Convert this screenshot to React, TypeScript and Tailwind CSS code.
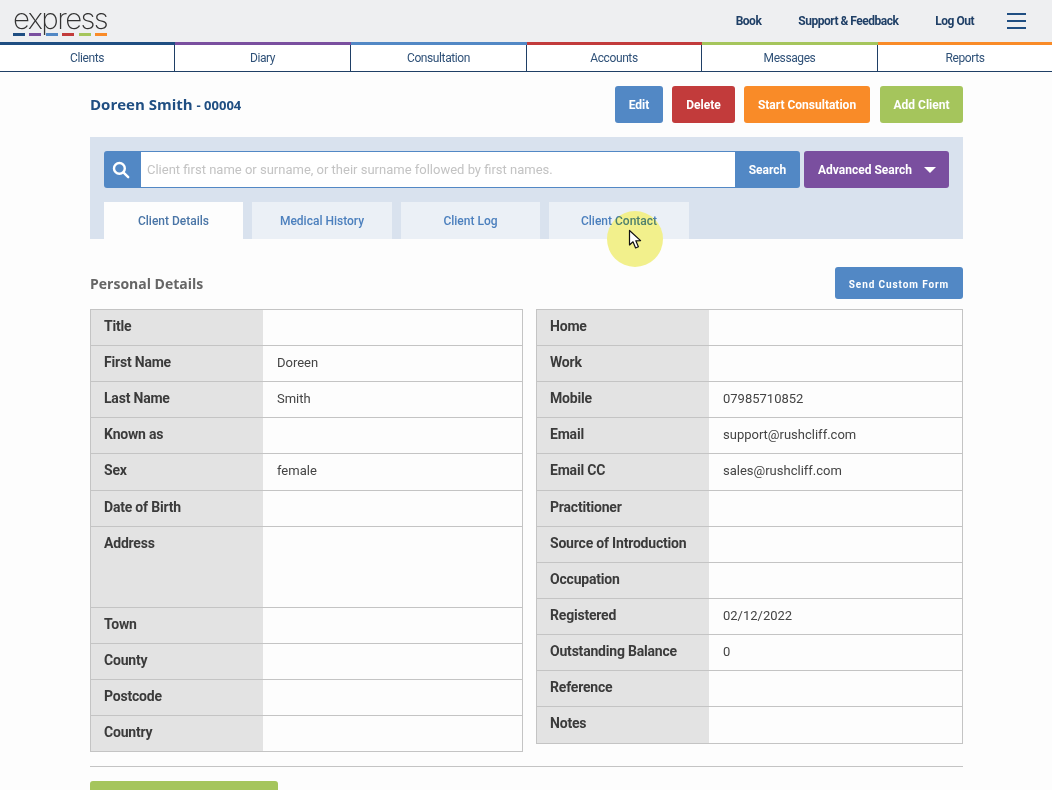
const navItems = [
  { label: "Clients", bar: "bg-[#1f4e82]" },
  { label: "Diary", bar: "bg-[#7a4f9f]" },
  { label: "Consultation", bar: "bg-[#5288c5]" },
  { label: "Accounts", bar: "bg-[#c23b3b]" },
  { label: "Messages", bar: "bg-[#a5c55c]" },
  { label: "Reports", bar: "bg-[#f98b28]" },
];

const logoDashes = ["bg-[#1f4e82]", "bg-[#7a4f9f]", "bg-[#5288c5]", "bg-[#c23b3b]", "bg-[#a5c55c]", "bg-[#f98b28]"];

const tabs = [
  { label: "Client Details", active: true, w: "w-[139px]" },
  { label: "Medical History", active: false, w: "w-[140px]" },
  { label: "Client Log", active: false, w: "w-[139px]" },
  { label: "Client Contact", active: false, w: "w-[140px]" },
];

type Row = { label: string; value?: string; tall?: boolean };

const leftRows: Row[] = [
  { label: "Title" },
  { label: "First Name", value: "Doreen" },
  { label: "Last Name", value: "Smith" },
  { label: "Known as" },
  { label: "Sex", value: "female" },
  { label: "Date of Birth" },
  { label: "Address", tall: true },
  { label: "Town" },
  { label: "County" },
  { label: "Postcode" },
  { label: "Country" },
];

const rightRows: Row[] = [
  { label: "Home" },
  { label: "Work" },
  { label: "Mobile", value: "07985710852" },
  { label: "Email", value: "support@rushcliff.com" },
  { label: "Email CC", value: "sales@rushcliff.com" },
  { label: "Practitioner" },
  { label: "Source of Introduction" },
  { label: "Occupation" },
  { label: "Registered", value: "02/12/2022" },
  { label: "Outstanding Balance", value: "0" },
  { label: "Reference" },
  { label: "Notes" },
];

function DetailTable({ rows, className }: { rows: Row[]; className: string }) {
  return (
    <div className={`border border-[#c4c4c4] ${className}`}>
      {rows.map((r, i) => (
        <div
          key={r.label}
          className={`flex ${r.tall ? "h-[81px]" : i === 0 ? "h-[35px]" : "h-[36.15px]"} ${i > 0 ? "border-t border-[#c4c4c4]" : ""}`}
        >
          <div className="w-[172px] shrink-0 bg-[#e3e3e3] pl-[13px] pt-[6px] text-[14px] leading-[20px] font-bold tracking-[-0.2px] text-[#3b3b3b]">
            {r.label}
          </div>
          <div className="pl-[14px] pt-[7px] text-[13px] leading-[20px] text-[#444]">{r.value}</div>
        </div>
      ))}
    </div>
  );
}

export default function App() {
  return (
    <div className="relative h-[790px] w-[1052px] overflow-hidden bg-[#fdfdfd] font-['Roboto',sans-serif]">
      <header className="flex h-[42px] items-center bg-[#eeeff1] pl-[13px] pr-[26px]">
        <div className="w-[100px] self-start pt-[6px]">
          <div className="-mt-[6px] -mb-[2px] font-['Inter',sans-serif] text-[29.5px] leading-[36px] font-extralight tracking-[-1.6px] whitespace-nowrap text-[#333]">
            express
          </div>
          <div className="-mt-[3px] flex gap-[4.4px]">
            {logoDashes.map((c) => (
              <div key={c} className={`h-[3px] w-[12px] ${c}`} />
            ))}
          </div>
        </div>
        <nav className="ml-auto flex items-center text-[12px] font-bold tracking-[-0.5px] text-[#1f3f66]">
          <span>Book</span>
          <span className="ml-[37px]">Support &amp; Feedback</span>
          <span className="ml-[37px]">Log Out</span>
          <div className="ml-[33px] flex w-[19px] flex-col gap-[5px]">
            <div className="h-[2px] bg-[#1f4e82]" />
            <div className="h-[2px] bg-[#1f4e82]" />
            <div className="h-[2px] bg-[#1f4e82]" />
          </div>
        </nav>
      </header>

      <div className="grid grid-cols-[175px_176px_176px_175px_176px_1fr] border-b border-[#1f3f66]">
        {navItems.map((n, i) => (
          <div key={n.label} className="flex flex-col">
            <div className={`h-[3px] ${n.bar}`} />
            <div
              className={`h-[26px] bg-white text-center text-[12px] leading-[26px] tracking-[-0.4px] text-[#2f5178] ${i < 5 ? "border-r border-[#1f3f66]" : ""}`}
            >
              {n.label}
            </div>
          </div>
        ))}
      </div>

      <main className="mx-[90px] mr-[89px]">
        <div className="mt-[14px] flex h-[37px] items-center">
          <h1 className="font-['Open_Sans',sans-serif] text-[15px] font-bold text-[#1f4e82]">
            Doreen Smith <span className="text-[13px]">- 00004</span>
          </h1>
          <div className="ml-auto flex gap-[9px] text-[12px] font-bold text-white">
            <button className="h-[37px] w-[48px] rounded-[3px] bg-[#5288c5]">Edit</button>
            <button className="h-[37px] w-[63px] rounded-[3px] bg-[#c23b3b]">Delete</button>
            <button className="h-[37px] w-[126px] rounded-[3px] bg-[#f98b28]">Start Consultation</button>
            <button className="ml-[1px] h-[37px] w-[83px] rounded-[3px] bg-[#a5c55c]">Add Client</button>
          </div>
        </div>

        <section className="mt-[14px] h-[102px] bg-[#d9e2ee] px-[14px] pt-[14px]">
          <div className="flex h-[37px]">
            <div className="flex w-[37px] items-center justify-center rounded-l-[3px] bg-[#5288c5] pr-[3px]">
              <svg width="18" height="18" viewBox="0 0 18 18" fill="none" stroke="#fff" strokeWidth="2.4" strokeLinecap="round">
                <circle cx="7.4" cy="7.4" r="5.4" />
                <path d="M11.6 11.6 L16.2 16.2" />
              </svg>
            </div>
            <div className="flex w-[594px] items-center border-y border-[#5288c5] bg-white pl-[6px] text-[13px] text-[#c3c3c3]">
              Client first name or surname, or their surname followed by first names.
            </div>
            <button className="w-[65px] rounded-r-[3px] bg-[#5288c5] text-[12px] font-bold text-white">Search</button>
            <button className="ml-[4px] flex w-[145px] items-center rounded-[3px] bg-[#7a4f9f] pl-[14px] text-[12px] font-bold text-white">
              Advanced Search
              <span className="ml-[12px] h-0 w-0 border-x-[6px] border-t-[6px] border-x-transparent border-t-white" />
            </button>
          </div>
          <div className="mt-[14px] flex gap-[9px]">
            {tabs.map((t) => (
              <div
                key={t.label}
                className={`h-[37px] ${t.w} text-center text-[12px] leading-[39px] font-medium ${t.active ? "bg-[#fdfdfd] text-[#4a76a8]" : "bg-[#ebf0f6] text-[#5288c5]"}`}
              >
                <span className="relative z-10 mix-blend-multiply">{t.label}</span>
              </div>
            ))}
          </div>
        </section>

        <div className="mt-[28px] flex h-[32px] items-center">
          <h2 className="font-['Open_Sans',sans-serif] text-[14px] font-bold text-[#666]">Personal Details</h2>
          <button className="ml-auto h-[32px] w-[128px] rounded-[3px] bg-[#5288c5] pt-[2px] text-[10px] font-bold tracking-[0.9px] text-white">
            Send Custom Form
          </button>
        </div>

        <div className="mt-[10px] flex items-start justify-between">
          <DetailTable rows={leftRows} className="w-[433px]" />
          <DetailTable rows={rightRows} className="w-[427px]" />
        </div>

        <hr className="mt-[14px] border-[#c4c4c4]" />
        <div className="mt-[14px] h-[30px] w-[188px] rounded-[3px] bg-[#a5c55c]" />
      </main>

      {/* click highlight + pointer */}
      <div className="absolute left-[607px] top-[211px] z-0 h-[56px] w-[56px] rounded-full bg-[#f2f08c]" />
      <svg className="absolute left-[628px] top-[229px] z-20" width="15" height="21" viewBox="0 0 15 21">
        <path d="M1.5 1.5 L1.5 16 L5 12.8 L7.6 19 L10.4 17.8 L7.8 11.8 L12.6 11.6 Z" fill="#fff" stroke="#111" strokeWidth="1.2" strokeLinejoin="round" />
      </svg>
    </div>
  );
}
